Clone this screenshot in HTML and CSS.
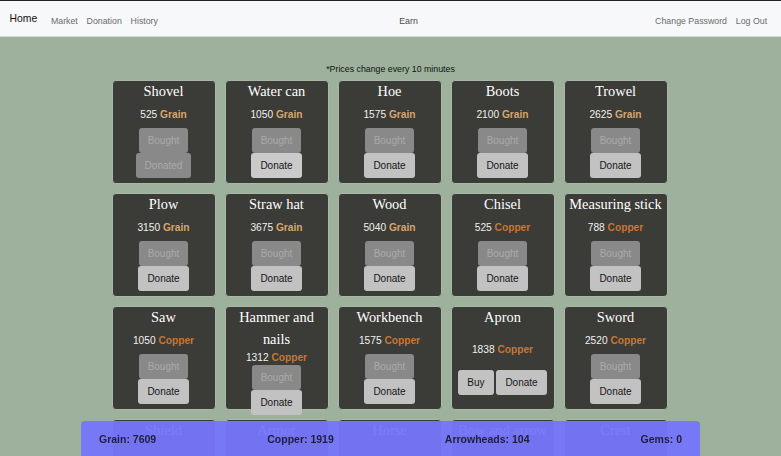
FILE: index.html
```html
<!DOCTYPE html>
<html lang="en">
<head>
<meta charset="utf-8">
<title>Earn</title>
<link rel="stylesheet" href="styles.css">
</head>
<body>
<nav class="navbar">
  <div class="nav-left">
    <a class="brand" href="#">Home</a>
    <a class="nav-link" href="#">Market</a>
    <a class="nav-link" href="#">Donation</a>
    <a class="nav-link" href="#">History</a>
  </div>
  <div class="nav-center">Earn</div>
  <div class="nav-right">
    <a class="nav-link" href="#">Change Password</a>
    <a class="nav-link" href="#">Log Out</a>
  </div>
</nav>
<main class="page">
  <p class="note">*Prices change every 10 minutes</p>
  <div class="grid">
    <div class="card"><div class="title">Shovel</div><div class="body"><div class="price">525 <b class="grain">Grain</b></div><div class="btns"><button class="btn off">Bought</button> <button class="btn off">Donated</button></div></div></div>
    <div class="card"><div class="title">Water can</div><div class="body"><div class="price">1050 <b class="grain">Grain</b></div><div class="btns"><button class="btn off">Bought</button> <button class="btn hover">Donate</button></div></div></div>
    <div class="card"><div class="title">Hoe</div><div class="body"><div class="price">1575 <b class="grain">Grain</b></div><div class="btns"><button class="btn off">Bought</button> <button class="btn">Donate</button></div></div></div>
    <div class="card"><div class="title">Boots</div><div class="body"><div class="price">2100 <b class="grain">Grain</b></div><div class="btns"><button class="btn off">Bought</button> <button class="btn">Donate</button></div></div></div>
    <div class="card"><div class="title">Trowel</div><div class="body"><div class="price">2625 <b class="grain">Grain</b></div><div class="btns"><button class="btn off">Bought</button> <button class="btn">Donate</button></div></div></div>

    <div class="card"><div class="title">Plow</div><div class="body"><div class="price">3150 <b class="grain">Grain</b></div><div class="btns"><button class="btn off">Bought</button> <button class="btn">Donate</button></div></div></div>
    <div class="card"><div class="title">Straw hat</div><div class="body"><div class="price">3675 <b class="grain">Grain</b></div><div class="btns"><button class="btn off">Bought</button> <button class="btn">Donate</button></div></div></div>
    <div class="card"><div class="title">Wood</div><div class="body"><div class="price">5040 <b class="grain">Grain</b></div><div class="btns"><button class="btn off">Bought</button> <button class="btn">Donate</button></div></div></div>
    <div class="card"><div class="title">Chisel</div><div class="body"><div class="price">525 <b class="copper">Copper</b></div><div class="btns"><button class="btn off">Bought</button> <button class="btn">Donate</button></div></div></div>
    <div class="card"><div class="title">Measuring stick</div><div class="body"><div class="price">788 <b class="copper">Copper</b></div><div class="btns"><button class="btn off">Bought</button> <button class="btn">Donate</button></div></div></div>

    <div class="card"><div class="title">Saw</div><div class="body"><div class="price">1050 <b class="copper">Copper</b></div><div class="btns"><button class="btn off">Bought</button> <button class="btn">Donate</button></div></div></div>
    <div class="card"><div class="title">Hammer and nails</div><div class="body"><div class="price">1312 <b class="copper">Copper</b></div><div class="btns"><button class="btn off">Bought</button> <button class="btn">Donate</button></div></div></div>
    <div class="card"><div class="title">Workbench</div><div class="body"><div class="price">1575 <b class="copper">Copper</b></div><div class="btns"><button class="btn off">Bought</button> <button class="btn">Donate</button></div></div></div>
    <div class="card"><div class="title">Apron</div><div class="body"><div class="price">1838 <b class="copper">Copper</b></div><div class="btns"><button class="btn">Buy</button> <button class="btn">Donate</button></div></div></div>
    <div class="card"><div class="title">Sword</div><div class="body"><div class="price">2520 <b class="copper">Copper</b></div><div class="btns"><button class="btn off">Bought</button> <button class="btn">Donate</button></div></div></div>

    <div class="card"><div class="title">Shield</div><div class="body"><div class="price">3150 <b class="copper">Copper</b></div><div class="btns"><button class="btn">Buy</button> <button class="btn">Donate</button></div></div></div>
    <div class="card"><div class="title">Armor</div><div class="body"><div class="price">3675 <b class="copper">Copper</b></div><div class="btns"><button class="btn">Buy</button> <button class="btn">Donate</button></div></div></div>
    <div class="card"><div class="title">Horse</div><div class="body"><div class="price">5040 <b class="copper">Copper</b></div><div class="btns"><button class="btn">Buy</button> <button class="btn">Donate</button></div></div></div>
    <div class="card"><div class="title">Bow and arrow</div><div class="body"><div class="price">525 <b class="arrow">Arrowheads</b></div><div class="btns"><button class="btn">Buy</button> <button class="btn">Donate</button></div></div></div>
    <div class="card"><div class="title">Crest</div><div class="body"><div class="price">788 <b class="arrow">Arrowheads</b></div><div class="btns"><button class="btn">Buy</button> <button class="btn">Donate</button></div></div></div>
  </div>
</main>
<footer class="resources">
  <span>Grain: 7609</span>
  <span>Copper: 1919</span>
  <span>Arrowheads: 104</span>
  <span>Gems: 0</span>
</footer>
</body>
</html>
```
FILE: styles.css
```css
* { box-sizing: border-box; }

html, body {
  margin: 0;
  padding: 0;
}

body {
  background: #9db19d;
  font-family: "Liberation Sans", Arial, sans-serif;
  color: #111;
}

.navbar {
  display: flex;
  justify-content: space-between;
  align-items: center;
  height: 37px;
  padding: 0 9.5px;
  background: #f7f8fa;
  border-top: 1px solid #222;
  border-bottom: 1px solid #d5dbd5;
}

.nav-left, .nav-right {
  display: flex;
  align-items: center;
}

.brand {
  font-size: 10.4px;
  color: #111;
  text-decoration: none;
  margin-right: 9.3px;
}

.nav-link {
  font-size: 8.8px;
  color: #6b6b6b;
  text-decoration: none;
  padding: 0 4.4px;
  position: relative;
  top: 2px;
}

.nav-center {
  font-size: 8.8px;
  color: #4a4a4a;
  position: relative;
  top: 2px;
  left: 2px;
}

.page {
  padding-top: 26px;
  padding-bottom: 40px;
}

.note {
  margin: 0 0 5px;
  font-size: 8.8px;
  line-height: 12px;
  text-align: center;
  color: #111;
}

.grid {
  display: grid;
  grid-template-columns: repeat(5, 104px);
  grid-auto-rows: 104px;
  gap: 9px;
  justify-content: center;
  position: relative;
  left: -1px;
}

.card {
  display: flex;
  flex-direction: column;
  background: #3b3b37;
  border: 1px solid #a8b9a8;
  border-radius: 4px;
  color: #fff;
  text-align: center;
}

.title {
  font-family: "Liberation Serif", "Times New Roman", serif;
  font-size: 14.4px;
  line-height: 22px;
  margin-top: -1px;
}

.body {
  flex: 1;
  display: flex;
  flex-direction: column;
  justify-content: space-evenly;
  padding-top: 1px;
}

.price {
  font-size: 10.2px;
  line-height: 14px;
  color: #f0f0f0;
}

.grain { color: #d8a66c; }
.copper { color: #c97732; }
.arrow { color: #b8b8b8; }

.btns {
  line-height: 1;
  font-size: 10px;
}

.btn {
  display: inline-block;
  vertical-align: top;
  height: 25px;
  padding: 0 9px;
  border: none;
  border-radius: 3px;
  background: #c2c2c2;
  color: #161616;
  font-family: "Liberation Sans", Arial, sans-serif;
  font-size: 10px;
  line-height: 25px;
  margin: 0;
}

.btn.hover { background: #cacaca; }

.btn.off {
  background: #898989;
  color: #a9a9a9;
}

.resources {
  position: fixed;
  left: 0;
  right: 0;
  bottom: 0;
  width: 619px;
  height: 35px;
  margin: 0 auto;
  padding: 0 18px;
  display: flex;
  justify-content: space-between;
  align-items: center;
  background: rgba(118, 118, 250, 0.96);
  border-radius: 4px 4px 0 0;
  font-weight: bold;
  font-size: 10.5px;
  color: #1f1f3a;
}
```
